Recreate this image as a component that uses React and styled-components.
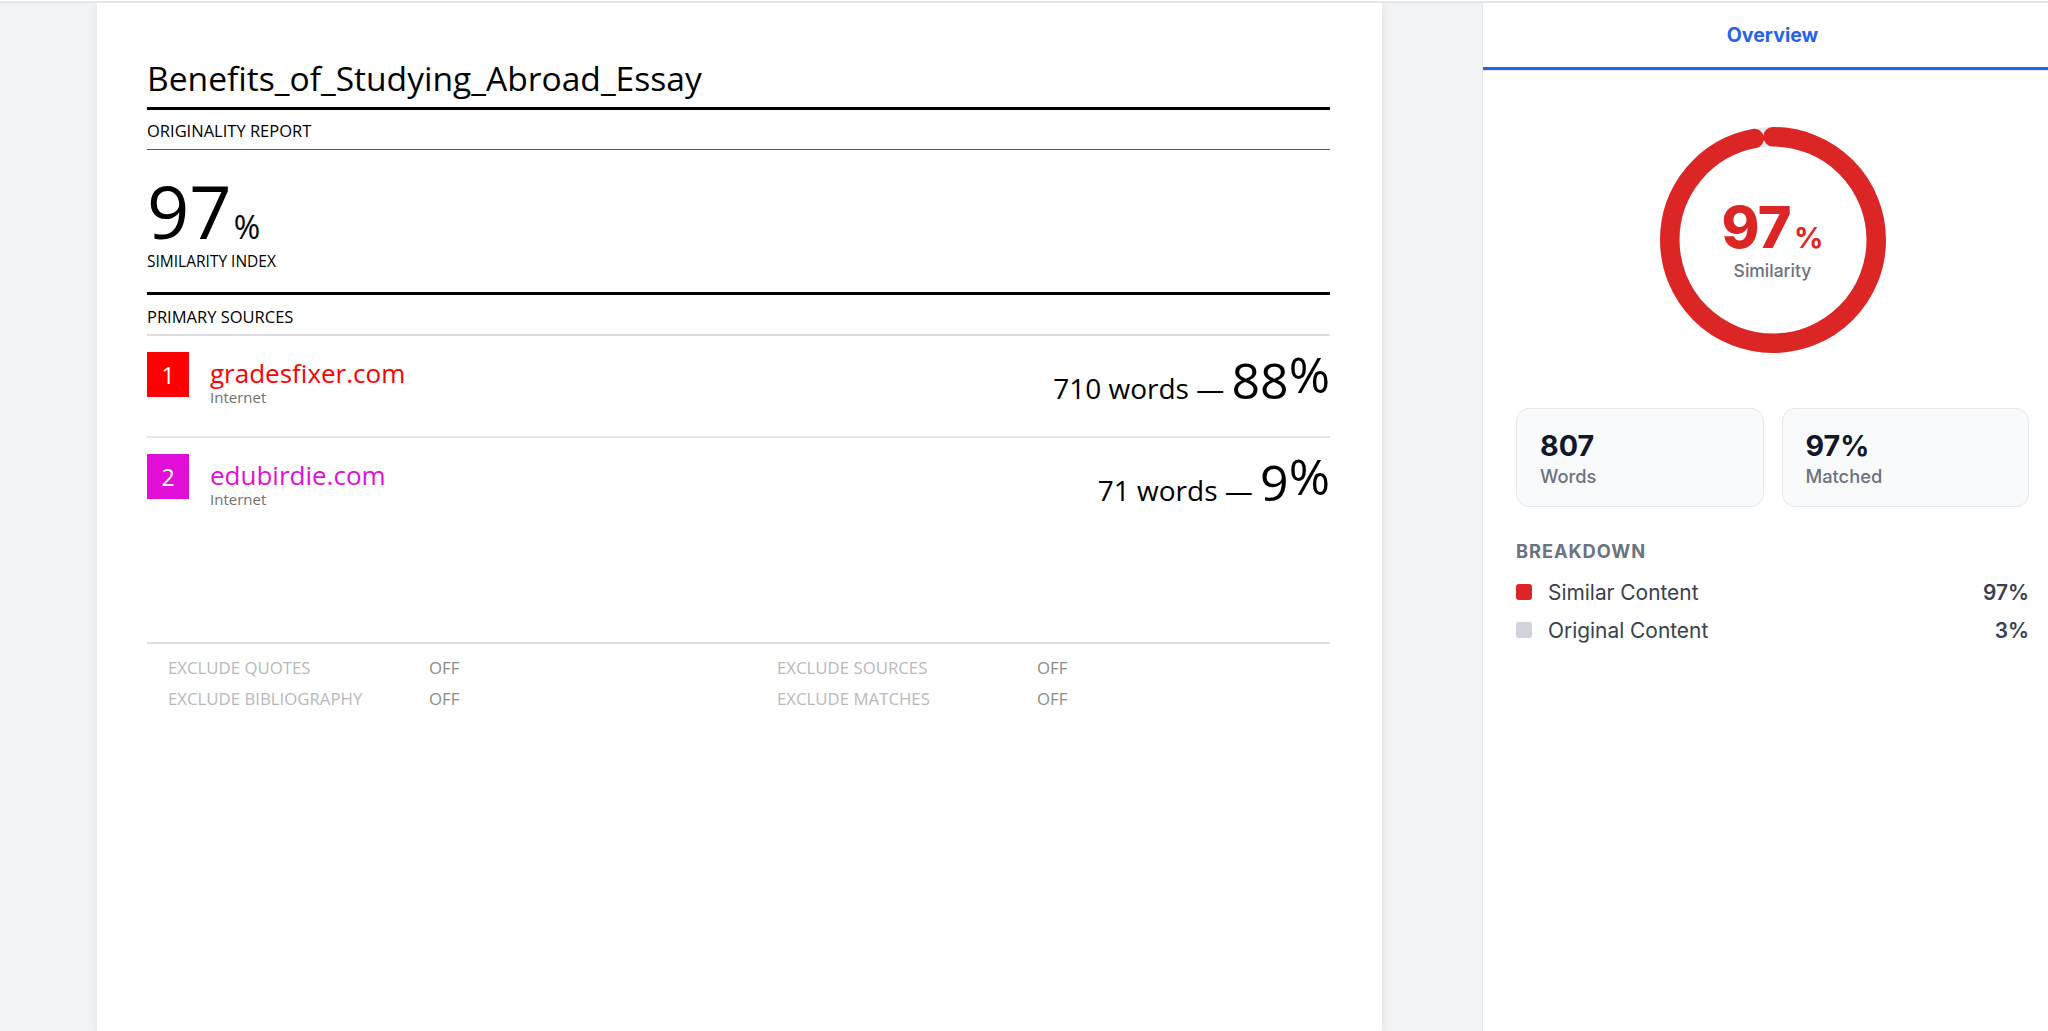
import React from "react";
import styled, { createGlobalStyle } from "styled-components";

const GlobalStyle = createGlobalStyle`
  html, body { margin: 0; padding: 0; background: #fff; }
  body { overflow: hidden; }
  *, *::before, *::after { box-sizing: border-box; }
`;

const Root = styled.div`
  display: flex;
  height: 100vh;
  margin-top: 1px;
  border-top: 2px solid #e6e7ea;
  background: #f2f3f5;
  overflow: hidden;
`;

const Main = styled.main`
  flex: 1;
  min-width: 0;
  padding: 0 100px 0 97px;
`;

const Page = styled.article`
  background: #fff;
  min-height: 100%;
  box-shadow: 0 0 8px rgba(0, 0, 0, 0.09);
  padding: 54px 52px 0 50px;
  font-family: "Open Sans", "Liberation Sans", sans-serif;
  color: #000;
`;

const Title = styled.h1`
  margin: 0;
  font-size: 33.6px;
  font-weight: 400;
  line-height: 42px;
  padding-bottom: 8px;
  border-bottom: 3px solid #000;
`;

const SectionLabel = styled.div`
  font-size: 16.5px;
  line-height: 20px;
  padding: ${(p) => p.$pt}px 0 ${(p) => p.$pb}px;
  border-bottom: ${(p) => p.$rule};
`;

const ScoreRow = styled.div`
  display: flex;
  align-items: baseline;
  padding-top: 24px;
`;

const ScoreNumber = styled.span`
  font-size: 74px;
  line-height: 74px;
`;

const ScoreSign = styled.span`
  font-size: 32px;
  line-height: 32px;
  margin-left: 2px;
`;

const ScoreCaption = styled.div`
  font-size: 15.5px;
  line-height: 20px;
  margin-top: 3px;
  padding-bottom: 21px;
  border-bottom: 3px solid #000;
`;

const SourceList = styled.div`
  min-height: 306px;
`;

const SourceRow = styled.div`
  display: flex;
  align-items: flex-start;
  height: 102px;
  padding-top: 16px;
  border-bottom: ${(p) => (p.$last ? "none" : "2px solid #e6e6e6")};
`;

const Badge = styled.div`
  flex: 0 0 42px;
  height: 45px;
  background: ${(p) => p.$color};
  color: #fff;
  font-size: 23px;
  display: flex;
  align-items: center;
  justify-content: center;
`;

const SourceInfo = styled.div`
  margin-left: 21px;
  padding-top: 6px;
`;

const SourceName = styled.div`
  font-size: 26px;
  line-height: 30px;
  color: ${(p) => p.$color};
`;

const SourceType = styled.div`
  font-size: 15px;
  line-height: 18px;
  color: #6f6f6f;
`;

const Stat = styled.div`
  margin-left: auto;
  margin-top: 3px;
  display: flex;
  align-items: baseline;
`;

const StatWords = styled.span`
  font-size: 28px;
  line-height: 28px;
  white-space: pre;
`;

const StatPct = styled.span`
  font-size: 50px;
  line-height: 50px;
`;

const StatSign = styled.span`
  font-size: 50px;
  line-height: 50px;
  position: relative;
  top: -6px;
`;

const Excludes = styled.div`
  border-top: 2px solid #dedede;
  padding: 8px 0 0 21px;
  display: grid;
  grid-template-columns: 261px 348px 260px 1fr;
  font-size: 16.8px;
  line-height: 31px;
`;

const ExcludeLabel = styled.span`
  color: #b9b9b9;
`;

const ExcludeValue = styled.span`
  color: #8b8b8b;
`;

/* Sidebar */

const Aside = styled.aside`
  flex: 0 0 566px;
  background: #fff;
  border-left: 1px solid #e5e7eb;
  font-family: Inter, "Liberation Sans", sans-serif;
`;

const TabBar = styled.div`
  display: flex;
  border-bottom: 1px solid #e5e7eb;
`;

const Tab = styled.div`
  flex: 1;
  height: 67px;
  padding-left: 14px;
  display: flex;
  align-items: center;
  justify-content: center;
  border-bottom: 3px solid #2563eb;
  color: #2563eb;
  font-size: 19.6px;
  font-weight: 700;
`;

const Panel = styled.div`
  padding: 56px 19px 0 33px;
`;

const Gauge = styled.div`
  position: relative;
  width: 226px;
  height: 226px;
  margin: 0 auto;
`;

const GaugeLabel = styled.div`
  position: absolute;
  inset: 0;
  display: flex;
  flex-direction: column;
  align-items: center;
  justify-content: center;
`;

const GaugeValue = styled.div`
  display: flex;
  align-items: baseline;
  color: #dc2626;
  font-weight: 800;
`;

const GaugeNumber = styled.span`
  font-size: 57.5px;
  line-height: 58px;
  letter-spacing: -0.01em;
`;

const GaugeSign = styled.span`
  font-size: 29px;
  font-weight: 700;
  margin-left: 3px;
`;

const GaugeCaption = styled.div`
  margin-top: 4px;
  font-size: 17.5px;
  line-height: 22px;
  font-weight: 500;
  color: #6b7280;
`;

const Cards = styled.div`
  display: grid;
  grid-template-columns: 1fr 1fr;
  gap: 18px;
  margin-top: 55px;
`;

const Card = styled.div`
  background: #f9fafb;
  border: 1px solid #e5e7eb;
  border-radius: 13px;
  padding: 20px 23px 19px;
`;

const CardValue = styled.div`
  font-size: 28.7px;
  line-height: 34px;
  font-weight: 700;
  color: #111827;
`;

const CardLabel = styled.div`
  margin-top: 2px;
  font-size: 18.3px;
  line-height: 22px;
  font-weight: 500;
  color: #6b7280;
`;

const BreakdownTitle = styled.div`
  margin-top: 33px;
  font-size: 18.3px;
  line-height: 22px;
  font-weight: 700;
  letter-spacing: 0.05em;
  color: #6b7280;
`;

const BreakdownList = styled.div`
  margin-top: 17px;
  display: flex;
  flex-direction: column;
  gap: 12px;
`;

const BreakdownRow = styled.div`
  display: flex;
  align-items: center;
  height: 26px;
  font-size: 20.9px;
  color: #374151;
`;

const Swatch = styled.span`
  width: 16px;
  height: 16px;
  border-radius: 3px;
  background: ${(p) => p.$color};
  margin-right: 16px;
  flex-shrink: 0;
`;

const RowLabel = styled.span`
  flex: 1;
`;

const RowValue = styled.span`
  font-weight: 600;
`;

const sources = [
  { n: 1, name: "gradesfixer.com", type: "Internet", color: "#ff0000", words: "710 words — ", pct: "88" },
  { n: 2, name: "edubirdie.com", type: "Internet", color: "#e10fd8", words: "71 words — ", pct: "9" },
];

const excludes = [
  ["EXCLUDE QUOTES", "OFF", "EXCLUDE SOURCES", "OFF"],
  ["EXCLUDE BIBLIOGRAPHY", "OFF", "EXCLUDE MATCHES", "OFF"],
];

function GaugeRing({ value }) {
  const r = 103.25;
  const c = 2 * Math.PI * r;
  return (
    <svg width="226" height="226" viewBox="0 0 226 226">
      <circle cx="113" cy="113" r={r} fill="none" stroke="#e5e7eb" strokeWidth="19.5" />
      <circle
        cx="113"
        cy="113"
        r={r}
        fill="none"
        stroke="#dc2626"
        strokeWidth="19.5"
        strokeLinecap="round"
        strokeDasharray={`${(c * value) / 100} ${c}`}
        transform="rotate(-90 113 113)"
      />
    </svg>
  );
}

export default function App() {
  return (
    <>
      <GlobalStyle />
      <Root>
        <Main>
          <Page>
            <Title>Benefits_of_Studying_Abroad_Essay</Title>
            <SectionLabel $pt={11} $pb={8} $rule="1px solid #555">
              ORIGINALITY REPORT
            </SectionLabel>
            <ScoreRow>
              <ScoreNumber>97</ScoreNumber>
              <ScoreSign>%</ScoreSign>
            </ScoreRow>
            <ScoreCaption>SIMILARITY INDEX</ScoreCaption>
            <SectionLabel $pt={12} $pb={7} $rule="2px solid #dedede">
              PRIMARY SOURCES
            </SectionLabel>
            <SourceList>
              {sources.map((s, i) => (
                <SourceRow key={s.n} $last={i === sources.length - 1}>
                  <Badge $color={s.color}>{s.n}</Badge>
                  <SourceInfo>
                    <SourceName $color={s.color}>{s.name}</SourceName>
                    <SourceType>{s.type}</SourceType>
                  </SourceInfo>
                  <Stat>
                    <StatWords>{s.words}</StatWords>
                    <StatPct>{s.pct}</StatPct>
                    <StatSign>%</StatSign>
                  </Stat>
                </SourceRow>
              ))}
            </SourceList>
            <Excludes>
              {excludes.map((row, i) => (
                <React.Fragment key={i}>
                  <ExcludeLabel>{row[0]}</ExcludeLabel>
                  <ExcludeValue>{row[1]}</ExcludeValue>
                  <ExcludeLabel>{row[2]}</ExcludeLabel>
                  <ExcludeValue>{row[3]}</ExcludeValue>
                </React.Fragment>
              ))}
            </Excludes>
          </Page>
        </Main>
        <Aside>
          <TabBar>
            <Tab>Overview</Tab>
          </TabBar>
          <Panel>
            <Gauge>
              <GaugeRing value={97} />
              <GaugeLabel>
                <GaugeValue>
                  <GaugeNumber>97</GaugeNumber>
                  <GaugeSign>%</GaugeSign>
                </GaugeValue>
                <GaugeCaption>Similarity</GaugeCaption>
              </GaugeLabel>
            </Gauge>
            <Cards>
              <Card>
                <CardValue>807</CardValue>
                <CardLabel>Words</CardLabel>
              </Card>
              <Card>
                <CardValue>97%</CardValue>
                <CardLabel>Matched</CardLabel>
              </Card>
            </Cards>
            <BreakdownTitle>BREAKDOWN</BreakdownTitle>
            <BreakdownList>
              <BreakdownRow>
                <Swatch $color="#dc2626" />
                <RowLabel>Similar Content</RowLabel>
                <RowValue>97%</RowValue>
              </BreakdownRow>
              <BreakdownRow>
                <Swatch $color="#d1d5db" />
                <RowLabel>Original Content</RowLabel>
                <RowValue>3%</RowValue>
              </BreakdownRow>
            </BreakdownList>
          </Panel>
        </Aside>
      </Root>
    </>
  );
}
